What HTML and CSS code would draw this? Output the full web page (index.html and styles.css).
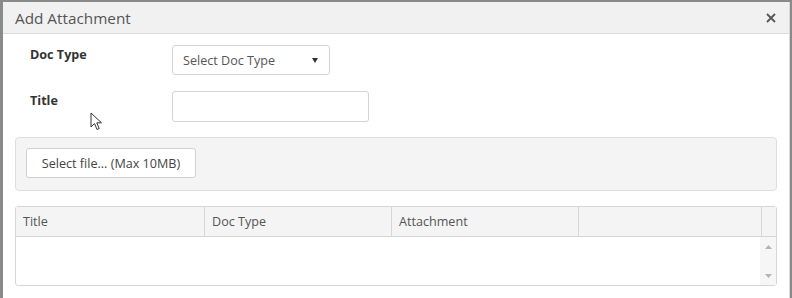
FILE: index.html
```html
<!DOCTYPE html>
<html>
<head>
<meta charset="utf-8">
<link rel="stylesheet" href="styles.css">
</head>
<body>
<div class="dialog">
  <div class="header">
    <span class="title">Add Attachment</span>
    <svg class="close" width="10" height="10" viewBox="0 0 10 10"><path d="M1 1 L9 9 M9 1 L1 9" stroke="#555" stroke-width="1.8" fill="none"/></svg>
  </div>
  <div class="body">
    <div class="row">
      <label class="label">Doc Type</label>
      <div class="select"><span>Select Doc Type</span><span class="caret"></span></div>
    </div>
    <div class="row row2">
      <label class="label">Title</label>
      <div class="input"></div>
    </div>
    <div class="well">
      <div class="btn">Select file... (Max 10MB)</div>
    </div>
    <div class="grid">
      <div class="ghead">
        <div class="col c1">Title</div>
        <div class="col c2">Doc Type</div>
        <div class="col c3">Attachment</div>
        <div class="col c4"></div>
        <div class="col c5"></div>
      </div>
      <div class="gbody">
        <div class="rows"></div>
        <div class="scroll">
          <svg width="7" height="4" viewBox="0 0 7 4"><path d="M0 4 L3.5 0 L7 4 Z" fill="#b5b5b5"/></svg>
          <svg width="7" height="4" viewBox="0 0 7 4"><path d="M0 0 L3.5 4 L7 0 Z" fill="#b5b5b5"/></svg>
        </div>
      </div>
    </div>
  </div>
  <svg class="cursor" width="14" height="20" viewBox="0 0 14 20"><path d="M1 1 L1 15 L4.5 11.5 L7 17.5 L9.2 16.5 L6.8 10.8 L11.5 10.8 Z" fill="#fff" stroke="#333" stroke-width="1"/></svg>
</div>
</body>
</html>
```
FILE: styles.css
```css
html, body { margin: 0; padding: 0; }
body {
  background: #8a8a8a;
  width: 792px;
  height: 298px;
  overflow: hidden;
  font-family: "Open Sans", sans-serif;
  color: #555;
}
.dialog {
  position: relative;
  margin: 2px 0 0 3px;
  width: 786px;
  height: 300px;
  background: #fff;
  border-right: 1px solid #d8d8d8;
}
.header {
  height: 31px;
  background: #f1f1f1;
  border-bottom: 1px solid #dcdcdc;
  display: flex;
  align-items: center;
  justify-content: space-between;
  padding: 0 12px 0 12px;
}
.title { font-size: 15.3px; color: #555; }
.close { margin-right: 1px; }
.body { padding: 11px 12px 0 12px; }
.row { display: flex; align-items: flex-start; height: 30px; }
.row2 { margin-top: 16px; }
.label {
  width: 142px;
  padding-left: 15px;
  padding-top: 1px;
  font-size: 12.6px;
  font-weight: bold;
  color: #333;
}
.select {
  width: 158px;
  height: 30px;
  border: 1px solid #d4d4d4;
  border-radius: 3px;
  display: flex;
  align-items: center;
  justify-content: space-between;
  padding: 0 9px 0 10px;
  box-sizing: border-box;
  font-size: 12.6px;
  color: #555;
}
.caret {
  width: 0; height: 0;
  border-left: 3.5px solid transparent;
  border-right: 3.5px solid transparent;
  border-top: 5px solid #333;
  margin-right: 2px;
}
.input {
  width: 197px;
  height: 31px;
  box-sizing: border-box;
  border: 1px solid #d4d4d4;
  border-radius: 3px;
}
.well {
  margin-top: 16px;
  height: 54px;
  box-sizing: border-box;
  background: #f4f4f4;
  border: 1px solid #dedede;
  border-radius: 4px;
  padding: 10px 10px;
}
.btn {
  display: inline-flex;
  align-items: center;
  justify-content: center;
  width: 170px;
  height: 30px;
  box-sizing: border-box;
  background: #fff;
  border: 1px solid #d0d0d0;
  border-radius: 3px;
  font-size: 12.6px;
  color: #444;
}
.grid {
  margin-top: 15px;
  height: 80px;
  box-sizing: border-box;
  border: 1px solid #d6d6d6;
  border-radius: 3px;
  display: flex;
  flex-direction: column;
}
.ghead {
  display: flex;
  height: 29px;
  background: #f4f4f4;
  border-bottom: 1px solid #d6d6d6;
  font-size: 12.6px;
  color: #555;
}
.col {
  box-sizing: border-box;
  border-right: 1px solid #d6d6d6;
  padding-left: 7px;
  display: flex;
  align-items: center;
}
.c1 { width: 189px; }
.c2 { width: 187px; }
.c3 { width: 187px; }
.c4 { width: 183px; }
.c5 { flex: 1; border-right: none; }
.gbody { flex: 1; display: flex; }
.rows { flex: 1; }
.scroll {
  width: 16px;
  background: #f6f6f6;
  display: flex;
  flex-direction: column;
  align-items: center;
  justify-content: space-between;
  padding: 8px 0 7px;
}
.cursor { position: absolute; left: 87px; top: 110px; }
```
